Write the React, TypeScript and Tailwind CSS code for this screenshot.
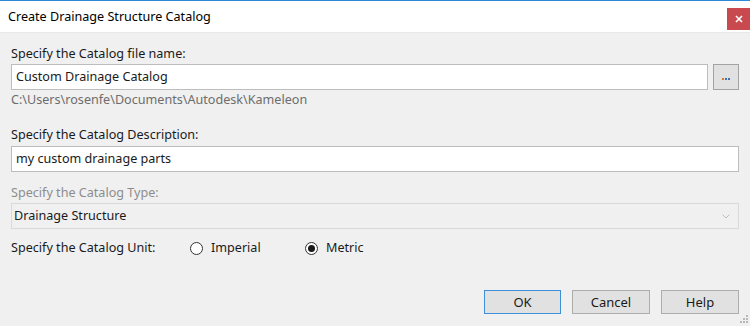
export default function App() {
  const font = { fontFamily: '"Noto Sans", "Open Sans", sans-serif' };
  return (
    <div
      className="flex h-[326px] w-[750px] flex-col overflow-hidden border-t border-[#2b89d9] bg-[#f0f0f0] text-[12.6px] text-[#1a1a1a]"
      style={font}
    >
      {/* title bar */}
      <div className="flex h-[32px] items-start justify-between border-b border-[#e8e8e8] bg-white">
        <span className="mt-[8px] pl-[8px] leading-[16px] text-black">
          Create Drainage Structure Catalog
        </span>
        <button className="mt-[7px] flex h-[22px] w-[23px] items-center justify-center bg-[#c84a4f]">
          <svg width="8" height="8" viewBox="0 0 8 8">
            <path d="M1 1L7 7M7 1L1 7" stroke="white" strokeWidth="1.6" />
          </svg>
        </button>
      </div>

      {/* body */}
      <div className="relative flex flex-1 flex-col px-[11px] pt-[13px]">
        <label className="leading-[16px]">Specify the Catalog file name:</label>
        <div className="mt-[2px] flex gap-[5px]">
          <div className="flex h-[26px] flex-1 items-center border border-[#bdbdbd] bg-white px-[4px] leading-[16px]">
            Custom Drainage Catalog
          </div>
          <button className="flex h-[26px] w-[26px] items-end justify-center border border-[#a3a3a3] bg-[#e1e1e1] pb-[9px]">
            <span className="flex gap-[1px]">
              <span className="h-[2px] w-[2px] bg-[#d27c2c]" />
              <span className="h-[2px] w-[2px] bg-[#3f6fb5]" />
              <span className="h-[2px] w-[2px] bg-[#3f6fb5]" />
            </span>
          </button>
        </div>
        <div className="mt-[2px] leading-[16px] text-[#6d6d6d]">
          C:\Users\rosenfe\Documents\Autodesk\Kameleon
        </div>

        <label className="mt-[19px] leading-[16px]">Specify the Catalog Description:</label>
        <div className="mt-[3px] flex h-[26px] items-center border border-[#bdbdbd] bg-white px-[4px] leading-[16px]">
          my custom drainage parts
        </div>

        <label className="mt-[13px] leading-[16px] text-[#8d8d8d]">Specify the Catalog Type:</label>
        <div className="mt-[2px] flex h-[26px] items-center justify-between border border-[#d9d9d9] bg-[#f0f0f0] pl-[2px] pr-[8px] leading-[16px]">
          <span>Drainage Structure</span>
          <svg width="8" height="5" viewBox="0 0 8 5">
            <path d="M0.5 0.5L4 4L7.5 0.5" fill="none" stroke="#bfbfbf" strokeWidth="1" />
          </svg>
        </div>

        <div className="mt-[11px] flex items-center leading-[16px]">
          <span className="w-[179px]">Specify the Catalog Unit:</span>
          <span className="flex w-[115px] items-center gap-[8px]">
            <span className="h-[13px] w-[13px] rounded-full border border-[#333] bg-white" />
            Imperial
          </span>
          <span className="flex items-center gap-[8px]">
            <span className="flex h-[13px] w-[13px] items-center justify-center rounded-full border border-[#333] bg-white">
              <span className="h-[7px] w-[7px] rounded-full bg-[#1a1a1a]" />
            </span>
            Metric
          </span>
        </div>

        <div className="mt-[34px] flex justify-end gap-[11px] text-[13px]">
          <button className="h-[24px] w-[77px] border border-[#3c8fd9] bg-[#e1e1e1] leading-[16px]">OK</button>
          <button className="h-[24px] w-[78px] border border-[#adadad] bg-[#e1e1e1] leading-[16px]">Cancel</button>
          <button className="h-[24px] w-[78px] border border-[#adadad] bg-[#e1e1e1] leading-[16px]">Help</button>
        </div>

        {/* resize grip */}
        <svg className="absolute bottom-[2px] right-[1px]" width="10" height="10" viewBox="0 0 10 10">
          <rect x="7" y="1" width="2" height="2" fill="#b8b8b8" />
          <rect x="4" y="4" width="2" height="2" fill="#b8b8b8" />
          <rect x="7" y="4" width="2" height="2" fill="#b8b8b8" />
          <rect x="1" y="7" width="2" height="2" fill="#b8b8b8" />
          <rect x="4" y="7" width="2" height="2" fill="#b8b8b8" />
          <rect x="7" y="7" width="2" height="2" fill="#b8b8b8" />
        </svg>
      </div>
    </div>
  );
}
